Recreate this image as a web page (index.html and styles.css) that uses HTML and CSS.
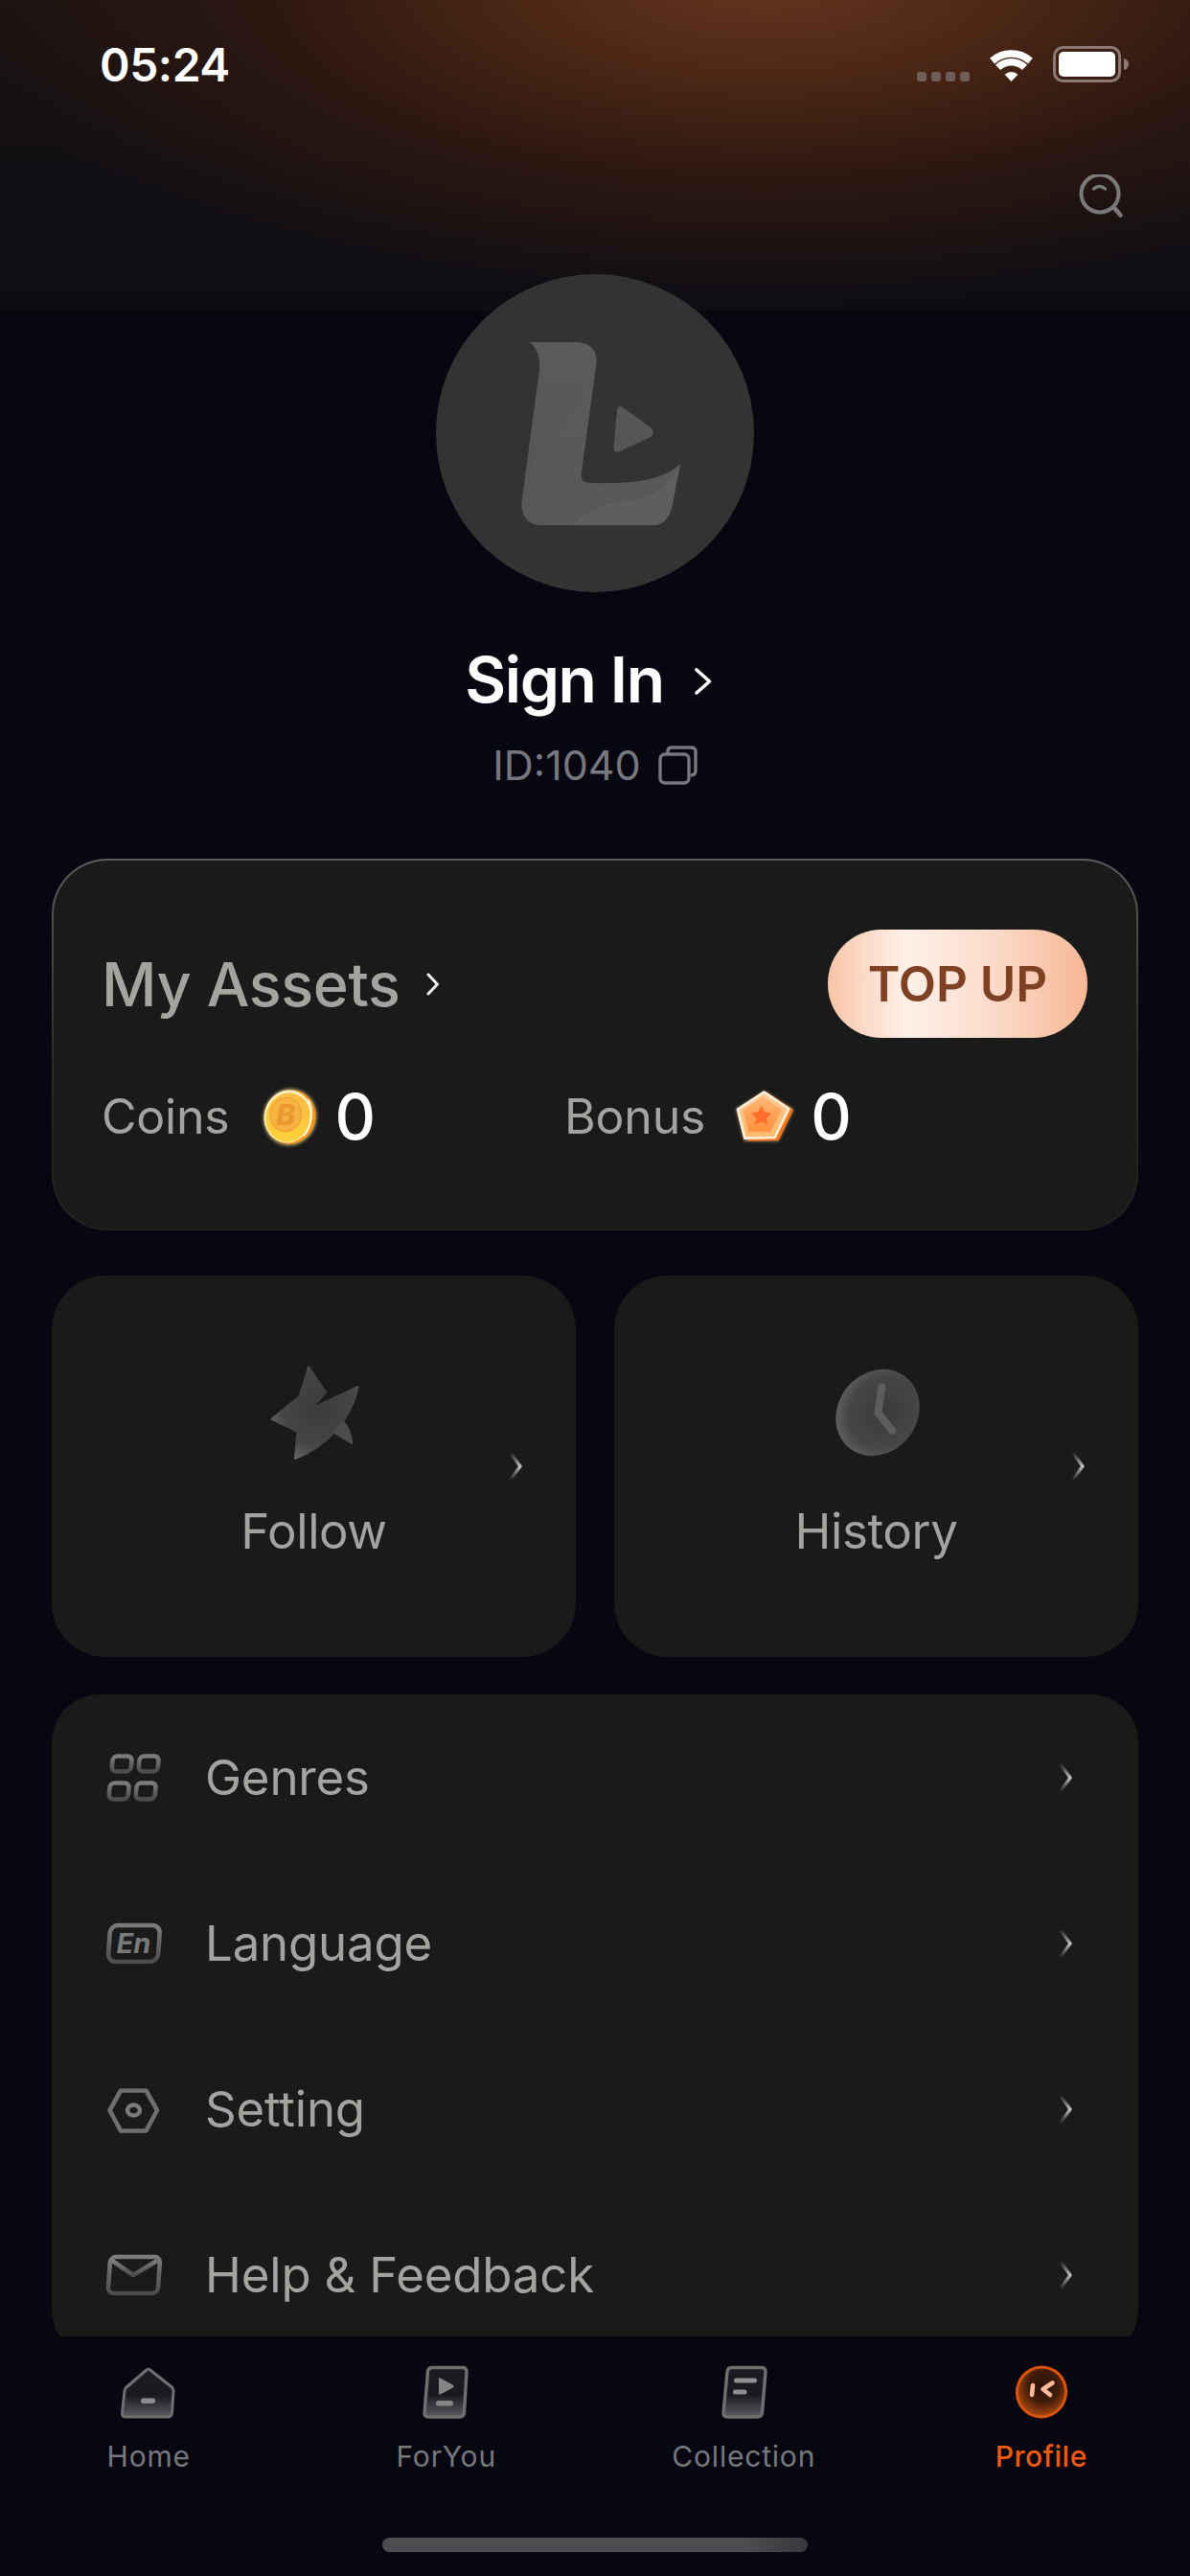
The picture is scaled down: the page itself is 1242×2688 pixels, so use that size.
FILE: index.html
```html
<!DOCTYPE html>
<html lang="en">
<head>
<meta charset="utf-8">
<title>Profile</title>
<link rel="stylesheet" href="styles.css">
</head>
<body>
<svg class="defs" width="0" height="0" aria-hidden="true">
  <defs>
    <linearGradient id="chev" gradientUnits="userSpaceOnUse" x1="0" y1="0" x2="0" y2="30">
      <stop offset="0" stop-color="#9a9a9a" stop-opacity="0"/>
      <stop offset=".5" stop-color="#c4c4c4"/>
      <stop offset="1" stop-color="#9a9a9a" stop-opacity="0"/>
    </linearGradient>
    <linearGradient id="menuStroke" x1="0" y1="0" x2="0" y2="1">
      <stop offset="0" stop-color="#7c7c7c"/>
      <stop offset="1" stop-color="#4c4c4c"/>
    </linearGradient>
    <linearGradient id="tabFill" x1="0" y1="0" x2="0" y2="1">
      <stop offset="0" stop-color="#1b1b20"/>
      <stop offset=".55" stop-color="#1a1a1e"/>
      <stop offset="1" stop-color="#5e5e62"/>
    </linearGradient>
    <radialGradient id="softGrey" cx=".55" cy=".45" r=".6">
      <stop offset="0" stop-color="#3a3a3a"/>
      <stop offset=".7" stop-color="#464646"/>
      <stop offset="1" stop-color="#636363"/>
    </radialGradient>
    <linearGradient id="logoFill" x1="0" y1="0" x2="0" y2="1">
      <stop offset="0" stop-color="#5b5b59"/>
      <stop offset="1" stop-color="#545454"/>
    </linearGradient>
    <radialGradient id="profFill" cx=".5" cy=".38" r=".62">
      <stop offset="0" stop-color="#2a1208"/>
      <stop offset=".5" stop-color="#3f1c0a"/>
      <stop offset="1" stop-color="#b04a10"/>
    </radialGradient>
    <linearGradient id="coinFace" x1="0" y1="0" x2="0" y2="1">
      <stop offset="0" stop-color="#f9bb45"/>
      <stop offset="1" stop-color="#ffd23a"/>
    </linearGradient>
    <linearGradient id="gemFace" x1="0" y1="0" x2="0" y2="1">
      <stop offset="0" stop-color="#ffc890"/>
      <stop offset="1" stop-color="#ffbb70"/>
    </linearGradient>
    <linearGradient id="gemInner" x1="0" y1="0" x2="0" y2="1">
      <stop offset="0" stop-color="#ffb772"/>
      <stop offset="1" stop-color="#ff8f3d"/>
    </linearGradient>
    <filter id="glow" x="-20%" y="-20%" width="140%" height="140%"><feGaussianBlur stdDeviation="4"/></filter>
    <filter id="soft" x="-10%" y="-10%" width="120%" height="120%"><feGaussianBlur stdDeviation="1.5"/></filter>
    <symbol id="chevron" viewBox="0 0 16 30"><path d="M3 1 L13 15 L3 29" fill="none" stroke="url(#chev)" stroke-width="3.4" stroke-linejoin="round"/></symbol>
  </defs>
</svg>

<div class="phone">
  <main class="content">
    <header class="status">
      <span class="time">05:24</span>
      <div class="status-icons">
        <div class="signal"><i></i><i></i><i></i><i></i></div>
        <svg class="wifi" viewBox="0 0 47 36"><path d="M23.5 36 L16.6 28.8 A10 10 0 0 1 30.4 28.8 Z" fill="#fff"/><path d="M9.6 21.4 A20 20 0 0 1 37.4 21.4" fill="none" stroke="#fff" stroke-width="7.5"/><path d="M3.6 14.6 A30 30 0 0 1 43.4 14.6" fill="none" stroke="#fff" stroke-width="7.5"/></svg>
        <svg class="battery" viewBox="0 0 80 38"><rect x="1.5" y="1.5" width="68" height="35" rx="9" fill="none" stroke="#8b7a74" stroke-width="3"/><rect x="6" y="6" width="59" height="26" rx="5" fill="#fff"/><path d="M74 13 C78 14 79 17 79 19 C79 21 78 24 74 25 Z" fill="#8b7a74"/></svg>
      </div>
    </header>

    <div class="search-row">
      <svg class="search" viewBox="0 0 46 46"><circle cx="22" cy="20" r="19.5" fill="none" stroke="#7a7a7a" stroke-width="4"/><path d="M37 35 L43.5 42.5" stroke="#7a7a7a" stroke-width="4.5" stroke-linecap="round"/><path d="M15.5 15 Q21.5 10 27.5 15" fill="none" stroke="#7a7a7a" stroke-width="3.5" stroke-linecap="round"/></svg>
    </div>

    <section class="identity">
      <div class="avatar">
        <svg viewBox="0 0 332 332">
          <path d="M97.7 71 L145 71 C160 71 168 79 167.7 91 L151.7 208 C151 214 153 218 160 218 C195 219 235 218 255 198 L247 240 C244 254 238 262 226 262 L110 262 C96 262 88 251 89.5 237 L108 100 C109 86 106 78 97.7 71 Z" fill="url(#logoFill)"/>
          <path d="M167.7 91 L151.7 208 C151 214 153 218 160 218 C195 219 235 218 255 198 L247 240 C244 254 238 262 226 262 L110 262 C96 262 88 251 89.5 237 C95 190 125 165 145 143 C160 125 167 110 167.7 91 Z" fill="#5e5e5e" opacity=".45"/>
          <path d="M255 198 L247 240 C244 254 238 262 226 262 L143 262 C165 240 185 238 205 236 C228 232 245 220 255 198 Z" fill="#656565" opacity=".55"/>
          <path d="M195 139 L224 160 C228 163 228 168 224 170 L192 185 C188 187 185 184 185.5 180 L189 142 C189.5 138 192 137 195 139 Z" fill="#565656"/>
        </svg>
      </div>
      <div class="signin">
        <span>Sign In</span>
        <svg class="signin-chev" viewBox="0 0 18 28"><path d="M2 2 L15.5 14 L2 26" fill="none" stroke="#fff" stroke-width="3.6" stroke-linecap="round" stroke-linejoin="round"/></svg>
      </div>
      <div class="user-id">
        <span>ID:1040</span>
        <svg class="copy" viewBox="0 0 41 41"><rect x="2" y="9" width="30" height="30" rx="5" fill="none" stroke="#77787d" stroke-width="3.4"/><path d="M10 8 V6 C10 3.500 11.500 2 14 2 H34 C37 2 39 3.500 39 6 V26 C39 29 37.500 31 34 31" fill="none" stroke="#77787d" stroke-width="3.4"/></svg>
      </div>
    </section>

    <section class="assets">
      <div class="assets-top">
        <div class="assets-title">
          <span>My Assets</span>
          <svg class="assets-chev" viewBox="0 0 14 24"><path d="M2 2 L11.5 12 L2 22" fill="none" stroke="#f2f2f2" stroke-width="3" stroke-linecap="round" stroke-linejoin="round"/></svg>
        </div>
        <div class="topup">TOP UP</div>
      </div>
      <div class="balances">
        <div class="balance">
          <span class="balance-label">Coins</span>
          <svg class="coin" viewBox="0 0 180 180">
            <ellipse cx="92" cy="92" rx="84" ry="90" transform="rotate(15 92 92)" fill="#ffdc8a" opacity=".6" filter="url(#glow)"/>
            <ellipse cx="94" cy="92" rx="78" ry="85" transform="rotate(15 94 92)" fill="#f3961a"/>
            <ellipse cx="86" cy="90" rx="75" ry="83" transform="rotate(15 86 90)" fill="#ffeeb8"/>
            <ellipse cx="86" cy="93" rx="69" ry="77" transform="rotate(15 86 93)" fill="url(#coinFace)"/>
            <path d="M150 40 C166 70 160 120 136 150" fill="none" stroke="#fff6dc" stroke-width="6" stroke-linecap="round" filter="url(#soft)"/>
            <ellipse cx="79" cy="84" rx="48" ry="53" transform="rotate(15 79 84)" fill="#f8b440" stroke="#f2a334" stroke-width="5"/>
            <text class="coin-b" x="79" y="116">B</text>
          </svg>
          <span class="balance-value">0</span>
        </div>
        <div class="balance">
          <span class="balance-label">Bonus</span>
          <svg class="gem" viewBox="0 0 180 180">
            <path d="M90 10 L182 68 L134 168 L26 168 L0 66 Z" fill="#ffc98f" opacity=".55" filter="url(#glow)"/>
            <path d="M95 16 L176 70 L132 162 L40 164 Z" fill="#f8781c" stroke="#f8781c" stroke-width="6" stroke-linejoin="round"/>
            <path d="M88 14 L166 66 L122 156 L28 158 L6 68 Z" fill="url(#gemFace)" stroke="#fff0dc" stroke-width="8" stroke-linejoin="round"/>
            <path d="M84 32 L142 70 L108 138 L40 138 L24 72 Z" fill="url(#gemInner)" stroke="#ffa35f" stroke-width="3" stroke-linejoin="round"/>
            <path d="M80 60 L89 78 L108 81 L94 94 L98 113 L80 104 L62 113 L66 94 L52 81 L71 78 Z" fill="#ff6f2a" stroke="#ff6f2a" stroke-width="4" stroke-linejoin="round"/>
          </svg>
          <span class="balance-value">0</span>
        </div>
      </div>
    </section>

    <section class="tiles">
      <div class="tile">
        <svg class="tile-icon tile-icon-star" viewBox="0 0 480 480">
          <path d="M213 78 L268 158 L228 205 L368 140 C350 240 270 330 170 367 L178 282 L97 242 L185 170 Z" fill="url(#softGrey)" stroke="url(#softGrey)" stroke-width="5" stroke-linejoin="round"/>
          <path d="M320 248 C340 265 348 290 350 320 L292 285 Z" fill="#4c4c4c" stroke="#4c4c4c" stroke-width="4" stroke-linejoin="round"/>
        </svg>
        <span class="tile-label">Follow</span>
        <svg class="tile-chev"><use href="#chevron"/></svg>
      </div>
      <div class="tile">
        <svg class="tile-icon tile-icon-clock" viewBox="0 0 480 480">
          <ellipse cx="225" cy="222" rx="124" ry="142" transform="rotate(38 225 222)" fill="url(#softGrey)"/>
          <path d="M238 142 L226 222 L270 278" fill="none" stroke="#5d5d5d" stroke-width="24" stroke-linecap="round" stroke-linejoin="round"/>
        </svg>
        <span class="tile-label">History</span>
        <svg class="tile-chev"><use href="#chevron"/></svg>
      </div>
    </section>

    <section class="menu">
      <div class="menu-row">
        <svg class="menu-icon" viewBox="0 0 60 60"><g fill="none" stroke="url(#menuStroke)" stroke-width="4.6" transform="skewX(-5)"><rect x="8.500" y="7.500" width="20" height="16" rx="5"/><rect x="36.500" y="7.500" width="20" height="16" rx="5"/><rect x="8" y="35.500" width="20" height="17" rx="5"/><rect x="36" y="35.500" width="20" height="17" rx="5"/></g></svg>
        <span class="menu-label">Genres</span>
        <svg class="menu-chev"><use href="#chevron"/></svg>
      </div>
      <div class="menu-row">
        <svg class="menu-icon" viewBox="0 0 60 60"><g transform="skewX(-4)"><rect x="6" y="11" width="52" height="38" rx="8" fill="none" stroke="url(#menuStroke)" stroke-width="4.600"/></g><text class="menu-en" x="11.500" y="40">En</text></svg>
        <span class="menu-label">Language</span>
        <svg class="menu-chev"><use href="#chevron"/></svg>
      </div>
      <div class="menu-row">
        <svg class="menu-icon" viewBox="0 0 60 60"><path d="M4.500 31 L16 10.500 H42.500 L54 31 L42.500 52.500 H16 Z" fill="none" stroke="#6f6f6f" stroke-width="4.600" stroke-linejoin="round"/><ellipse cx="29.500" cy="31" rx="6.500" ry="5.500" fill="none" stroke="#7a7a7a" stroke-width="4.400"/></svg>
        <span class="menu-label">Setting</span>
        <svg class="menu-chev"><use href="#chevron"/></svg>
      </div>
      <div class="menu-row">
        <svg class="menu-icon" viewBox="0 0 60 60"><g fill="none" stroke="url(#menuStroke)" stroke-width="4.600" stroke-linejoin="round"><g transform="skewX(-4)"><rect x="6" y="11" width="52" height="38" rx="6"/></g><path d="M7 15 L29 30 L54 15"/></g></svg>
        <span class="menu-label">Help &amp; Feedback</span>
        <svg class="menu-chev"><use href="#chevron"/></svg>
      </div>
    </section>
  </main>

  <footer class="tabbar">
    <nav class="tabs">
      <div class="tab">
        <svg class="tab-icon" viewBox="0 0 60 60"><path d="M31 6.500 L54.500 25 C55.500 26 56 27 56 29 L54.500 52 C54 55 53 56 50 56 H6 C3.500 56 2.500 55 2.500 52 L5 29 C5 27 6 26 7 25 L28 7 C29 6 30 6 31 6.500 Z" fill="url(#tabFill)" stroke="#6f6f72" stroke-width="3" stroke-linejoin="round"/><rect x="22" y="36.500" width="15" height="5.500" rx="2.700" fill="#8c8c8e"/></svg>
        <span class="tab-label">Home</span>
      </div>
      <div class="tab">
        <svg class="tab-icon" viewBox="0 0 60 60"><path d="M15 4.500 H47 C50 4.500 51 6 51 8.500 L48.500 52 C48 55 46.500 56 44 56 H11 C8 56 7 55 7 52 L10.500 8.500 C11 6 12 4.500 15 4.500 Z" fill="url(#tabFill)" stroke="#6f6f72" stroke-width="3.400"/><path d="M23.500 15.500 L36.500 22.500 C38 23.500 38 24.500 36.500 25.500 L23.500 32.500 C22.500 33 22 32.500 22 31.500 V16.500 C22 15.500 22.500 15 23.500 15.500 Z" fill="#858587"/><rect x="19" y="39" width="18" height="5.500" rx="2.700" fill="#858587"/></svg>
        <span class="tab-label">ForYou</span>
      </div>
      <div class="tab">
        <svg class="tab-icon" viewBox="0 0 60 60"><path d="M18 4.500 H49 C52 4.500 53 6 53 8.500 L49.500 52 C49 55 47.500 56 45 56 H13 C10 56 9 55 9 52 L13 8.500 C13.500 6 15 4.500 18 4.500 Z" fill="url(#tabFill)" stroke="#6f6f72" stroke-width="3.400"/><rect x="20" y="15.500" width="24" height="5" rx="2.500" fill="#909092"/><rect x="19" y="27.500" width="14.500" height="5" rx="2.500" fill="#909092"/></svg>
        <span class="tab-label">Collection</span>
      </div>
      <div class="tab tab-active">
        <svg class="tab-icon" viewBox="0 0 60 60"><ellipse cx="30" cy="30" rx="25.500" ry="26" transform="rotate(20 30 30)" fill="url(#profFill)" stroke="#d9540e" stroke-width="3"/><path d="M21 23 L20 33" stroke="#ffb999" stroke-width="4.600" stroke-linecap="round"/><path d="M41.500 20.500 L31.500 27 L39 33" fill="none" stroke="#ffb999" stroke-width="4.600" stroke-linecap="round" stroke-linejoin="round"/></svg>
        <span class="tab-label">Profile</span>
      </div>
    </nav>
    <div class="home-indicator"></div>
  </footer>
</div>
</body>
</html>
```

FILE: styles.css
```css
* { box-sizing: border-box; }

html, body {
  margin: 0;
  padding: 0;
  background: #060711;
}

body {
  font-family: Inter, "Liberation Sans", sans-serif;
}

.defs { display: block; height: 0; }

.phone {
  width: 1242px;
  height: 2688px;
  display: flex;
  flex-direction: column;
  overflow: hidden;
  background:
    radial-gradient(ellipse 860px 340px at 800px -20px, #64351f 0%, #4c2716 30%, #2b1710 62%, rgba(20,15,18,0) 100%) no-repeat 0 0 / 100% 325px,
    linear-gradient(180deg, #1a1211 0%, #110f14 60%, #0d0d14 100%) no-repeat 0 0 / 100% 325px,
    #060711;
}

.content {
  flex: 1;
  min-height: 0;
  overflow: hidden;
}

/* status bar */
.status {
  height: 134px;
  padding: 0 72px 0 104px;
  display: flex;
  align-items: center;
  justify-content: space-between;
}

.time {
  color: #fff;
  font-size: 48px;
  font-weight: 600;
  letter-spacing: -0.5px;
}

.status-icons {
  display: flex;
  align-items: center;
  gap: 20px;
}

.signal {
  display: flex;
  gap: 5px;
  margin-top: 26px;
}

.signal i {
  width: 10px;
  height: 10px;
  border-radius: 3px;
  background: #6f5d56;
}

.wifi { width: 47px; height: 36px; }
.battery { width: 80px; height: 38px; margin-right: -9px; }

/* search */
.search-row {
  height: 152px;
  padding: 48px 70px 0 0;
  display: flex;
  justify-content: flex-end;
  align-items: flex-start;
}

.search { width: 46px; height: 46px; }

/* identity */
.identity {
  display: flex;
  flex-direction: column;
  align-items: center;
}

.avatar {
  width: 332px;
  height: 332px;
  border-radius: 50%;
  background: #333;
}

.avatar svg { display: block; width: 332px; height: 332px; }

.signin {
  height: 80px;
  margin-top: 51px;
  padding-right: 14px;
  display: flex;
  align-items: center;
  gap: 32px;
  color: #fff;
  font-size: 66px;
  font-weight: 600;
  letter-spacing: -1.4px;
}

.signin-chev { width: 18px; height: 28px; margin-top: 4px; }

.user-id {
  height: 50px;
  margin-top: 24px;
  display: flex;
  align-items: center;
  gap: 18px;
  color: #77787d;
  font-size: 43px;
  font-weight: 400;
}

.copy { width: 41px; height: 41px; }

/* assets card */
.assets {
  height: 388px;
  margin: 73px 54px 0;
  padding: 72px 51px 0 50px;
  border: 2px solid transparent;
  border-radius: 58px;
  background:
    linear-gradient(#1a1a1a, #1a1a1a) padding-box,
    linear-gradient(180deg, #5c5c5c 0%, #2a2a2a 55%, #1f1f1f 100%) border-box;
}

.assets-top {
  height: 113px;
  display: flex;
  align-items: center;
  justify-content: space-between;
}

.assets-title {
  display: flex;
  align-items: center;
  gap: 28px;
  color: #a3a3a0;
  font-size: 63px;
  font-weight: 500;
  letter-spacing: -0.4px;
}

.assets-chev { width: 14px; height: 24px; }

.topup {
  width: 271px;
  height: 113px;
  display: flex;
  align-items: center;
  justify-content: center;
  border-radius: 56px;
  background: linear-gradient(90deg, #f8c5a8 0%, #fff0e8 30%, #fbdccb 62%, #f7b796 100%);
  color: #7f4124;
  font-size: 51px;
  font-weight: 600;
}

.balances {
  margin-top: 52px;
  display: grid;
  grid-template-columns: 483px 1fr;
}

.balance {
  height: 60px;
  display: flex;
  align-items: center;
}

.balance-label {
  color: #a3a3a0;
  font-size: 50px;
  font-weight: 400;
  letter-spacing: -0.2px;
}

.balance-value {
  color: #fff;
  font-size: 66px;
  font-weight: 500;
  margin-left: 18px;
}

.coin, .gem { width: 60px; height: 60px; overflow: visible; margin-left: 32px; }

.coin-b {
  font-family: Inter, "Liberation Sans", sans-serif;
  font-size: 90px;
  font-weight: 800;
  font-style: italic;
  fill: #ea9830;
  text-anchor: middle;
}

/* tiles */
.tiles {
  margin: 47px 54px 0;
  display: grid;
  grid-template-columns: 1fr 1fr;
  gap: 40px;
}

.tile {
  position: relative;
  height: 398px;
  padding-top: 69px;
  display: flex;
  flex-direction: column;
  align-items: center;
  border-radius: 56px;
  background: #1a1a1a;
}

.tile-icon { width: 160px; height: 160px; }
.tile-icon-star { transform: translateX(3px); }
.tile-icon-clock { transform: translateX(6px); }

.tile-label {
  margin-top: 7px;
  color: #a3a3a0;
  font-size: 51px;
  line-height: 62px;
  letter-spacing: -0.4px;
}

.tile-chev {
  position: absolute;
  right: 55px;
  top: 184px;
  width: 16px;
  height: 30px;
}

/* menu */
.menu {
  margin: 39px 54px 0;
  border-radius: 50px;
  background: #1a1a1a;
}

.menu-row {
  height: 173px;
  padding: 0 68px 0 56px;
  display: flex;
  align-items: center;
}

.menu-icon { width: 60px; height: 60px; flex: none; }

.menu-en {
  font-family: Inter, "Liberation Sans", sans-serif;
  font-size: 29px;
  font-weight: 700;
  font-style: italic;
  fill: #7a7a7a;
}

.menu-label {
  flex: 1;
  margin-left: 44px;
  color: #a3a3a0;
  font-size: 51px;
  letter-spacing: -0.2px;
}

.menu-chev { width: 16px; height: 30px; flex: none; }

/* tab bar */
.tabbar {
  height: 250px;
  flex: none;
  background: #060711;
  display: flex;
  flex-direction: column;
  align-items: center;
}

.tabs {
  width: 100%;
  padding-top: 28px;
  display: grid;
  grid-template-columns: repeat(4, 1fr);
}

.tab {
  display: flex;
  flex-direction: column;
  align-items: center;
}

.tab-icon { width: 60px; height: 60px; }

.tab-label {
  margin-top: 19px;
  color: #77787d;
  font-size: 30px;
  line-height: 36px;
  font-weight: 400;
  letter-spacing: 0.8px;
}

.tab-active .tab-label { color: #f0590f; font-weight: 500; letter-spacing: 0.5px; }

.home-indicator {
  width: 444px;
  height: 15px;
  margin-top: 67px;
  border-radius: 8px;
  background: linear-gradient(90deg, #4d4d4f 0%, #4d4d4f 85%, #38383c 100%);
}
```
